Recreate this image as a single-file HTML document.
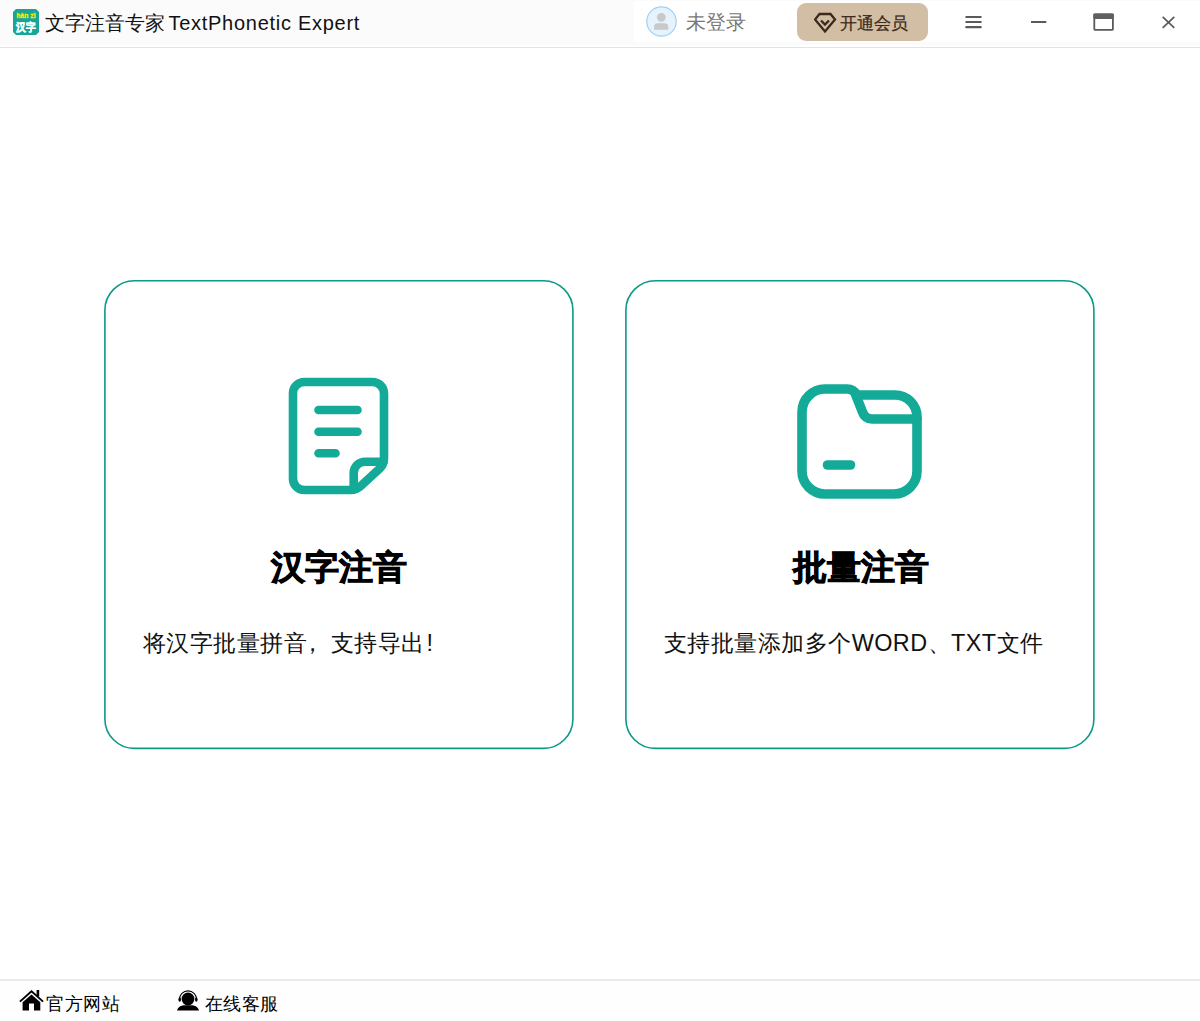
<!DOCTYPE html>
<html><head><meta charset="utf-8">
<style>
*{margin:0;padding:0;box-sizing:border-box}
html,body{width:1200px;height:1021px;overflow:hidden;background:#fff;font-family:"Liberation Sans",sans-serif;position:relative}
.abs{position:absolute}
#titlebar{left:0;top:0;width:1200px;height:45px;background:#fbfbfb}
#tline{left:0;top:47px;width:1200px;height:1px;background:#e3e3e3}
#logo{left:13px;top:9px;width:26px;height:26px}
#title{left:45px;top:10px;font-size:20px;line-height:26px;color:#111;white-space:nowrap}
#title2{left:168.5px;top:9.5px;font-size:20px;line-height:26px;color:#111;white-space:nowrap;letter-spacing:0.72px}
#user{left:634px;top:1px;width:566px;height:41px;background:#fff}
#uname{left:686px;top:8.5px;font-size:20px;line-height:26px;color:#777}
#vip{left:797px;top:3px;width:131px;height:38px;border-radius:9px;background:#d2bda5}
#viptxt{left:840px;top:11.5px;font-size:17px;line-height:24px;color:#3e2a1a;-webkit-text-stroke:0.25px #3e2a1a}
.ct{font-size:34px;font-weight:900;-webkit-text-stroke:0.9px #000;color:#000;line-height:40px;text-align:center;width:469px}
.cs{font-size:23.4px;letter-spacing:0.46px;color:#111;line-height:30px;white-space:nowrap}
#bottombar{left:0;top:979px;width:1200px;height:42px;background:#fefefe}
#bline{left:0;top:979px;width:1200px;height:2px;background:#ebebeb}
.bt{font-size:18px;line-height:24px;color:#000;white-space:nowrap;letter-spacing:0.6px}
</style></head><body>
<div id="titlebar" class="abs"></div><div id="tline" class="abs"></div>
<svg id="logo" class="abs" viewBox="0 0 26 26">
<path d="M3 0H23L26 3V23L23 26H3L0 23V3Z" fill="#17a597"/>
<text x="3.5" y="9.2" font-family="Liberation Sans" font-weight="bold" font-size="7.5" fill="#ffe900" stroke="#ffe900" stroke-width="0.3" textLength="19" lengthAdjust="spacingAndGlyphs">hàn zì</text>
<text x="3.2" y="21.8" font-family="Liberation Sans" font-weight="900" font-size="10.5" fill="#fff" stroke="#fff" stroke-width="0.5" textLength="19.5" lengthAdjust="spacingAndGlyphs">汉字</text>
</svg>
<div id="title" class="abs">文字注音专家</div><div id="title2" class="abs">TextPhonetic Expert</div>
<div id="user" class="abs"></div>
<div id="uname" class="abs">未登录</div>
<div id="vip" class="abs"></div>
<div id="viptxt" class="abs">开通会员</div>


<svg class="abs" style="left:646px;top:6px" width="31" height="31" viewBox="0 0 31 31">
<circle cx="15.5" cy="15.5" r="14.7" fill="#e6f3fd" stroke="#9ed2f7" stroke-width="1.2"/>
<circle cx="15.3" cy="11.3" r="4.4" fill="#c9c9c9"/>
<path d="M8 23.8V21.3A4 4 0 0 1 12 17.3H18.3A4 4 0 0 1 22.3 21.3V23.8Z" fill="#c9c9c9"/>
</svg>
<svg class="abs" style="left:814px;top:12px" width="23" height="22" viewBox="0 0 23 22">
<g fill="none" stroke="#3b2a1c" stroke-width="2.3" stroke-linejoin="miter">
<path d="M5.5 2H16.5L21 7.5L11 19.5L1 7.5Z"/>
<path d="M7 8.5L11 12.5L15 8.5"/>
</g></svg>
<svg class="abs" style="left:960px;top:10px" width="230" height="26" viewBox="0 0 230 26">
<g fill="none" stroke="#5a5a5a" stroke-width="2">
<path d="M6.3 7H20.7M6.3 12H20.7M6.3 17.2H20.7" stroke-width="2.2" stroke-linecap="round"/>
<path d="M71 12H86.3"/>
<rect x="134.3" y="4.3" width="18.6" height="15.6" rx="1" stroke-width="1.8"/>
<rect x="133.4" y="3.4" width="20.4" height="5.6" fill="#5f5f5f" stroke="none" rx="0.8"/>
<path d="M202.7 6.9L214.3 17.9M214.3 6.9L202.7 17.9" stroke-width="1.7"/>
</g></svg>

<svg class="abs" style="left:0;top:0" width="1200" height="800" viewBox="0 0 1200 800">
<g fill="none" stroke="#0b998a" stroke-width="1.6">
<rect x="104.9" y="280.8" width="468" height="467.6" rx="29.5"/>
<rect x="625.9" y="280.8" width="468" height="467.6" rx="29.5"/>
</g></svg>
<div class="abs ct" style="left:104px;top:547px">汉字注音</div>
<div class="abs ct" style="left:626px;top:547px">批量注音</div>
<div class="abs cs" style="left:143px;top:628px">将汉字批量拼音<span style="margin-left:-6px;margin-right:6px">，</span>支持导出<span style="margin-left:2px">!</span></div>
<div class="abs cs" style="left:664px;top:628px">支持批量添加多个WORD、TXT文件</div>


<svg class="abs" style="left:288px;top:377px" width="101" height="118" viewBox="0 0 101 118">
<g fill="none" stroke="#14aa98" stroke-width="8.6" stroke-linecap="round" stroke-linejoin="round">
<path d="M5 16.3A11.3 11.3 0 0 1 16.3 5H84.5A11.5 11.5 0 0 1 96 16.5V81.5Q96 87.5 91.6 91.6L72.9 108.9Q68.5 113 62.5 113H16.3A11.3 11.3 0 0 1 5 101.7Z"/>
<path d="M65.7 112V96A11.3 11.3 0 0 1 77 84.7H95.5"/>
<path d="M30.5 33H69.5M30.5 54.7H69.5M30.5 76.3H47.5"/>
</g></svg>
<svg class="abs" style="left:797px;top:384px" width="126" height="116" viewBox="0 0 126 116">
<g fill="none" stroke="#14aa98" stroke-width="9.6" stroke-linecap="round" stroke-linejoin="round">
<path d="M5 28A23 23 0 0 1 28 5H50C55 5 57 7 60 11H98A22 22 0 0 1 120 33V87A23 23 0 0 1 97 110H28A23 23 0 0 1 5 87Z"/>
<path d="M58 9L65.5 28A10 10 0 0 0 75 35H120"/>
<path d="M30.5 81H53.5"/>
</g></svg>

<div id="bottombar" class="abs"></div><div id="bline" class="abs"></div>
<div class="abs bt" style="left:46px;top:991.5px">官方网站</div>
<div class="abs bt" style="left:204.5px;top:991.5px">在线客服</div>

<svg class="abs" style="left:19px;top:989px" width="25" height="23" viewBox="0 0 25 23">
<path d="M0.9 12.6L12.5 2.2L24.1 12.6" fill="none" stroke="#000" stroke-width="1.9"/>
<rect x="17.6" y="1" width="2.6" height="6.5" fill="#000"/>
<path d="M3.6 13.2L12.5 5.6L21.3 13.2V21.5H15V14.6H10V21.5H3.6Z" fill="#000"/>
</svg>
<svg class="abs" style="left:176px;top:988px" width="24" height="24" viewBox="0 0 24 24">
<path d="M3.4 11.5A8.6 8.6 0 0 1 20.6 11.5" fill="none" stroke="#000" stroke-width="1.1"/>
<ellipse cx="3.7" cy="11.6" rx="1.3" ry="2.2" fill="#000"/>
<ellipse cx="20.3" cy="11.6" rx="1.3" ry="2.2" fill="#000"/>
<circle cx="12" cy="11" r="6.4" fill="#000"/>
<path d="M1 22.6C1.5 19.5 5 17.3 8.5 17.3H15.5C19 17.3 22.5 19.5 23 22.6Z" fill="#000"/>
</svg>
</body></html>
